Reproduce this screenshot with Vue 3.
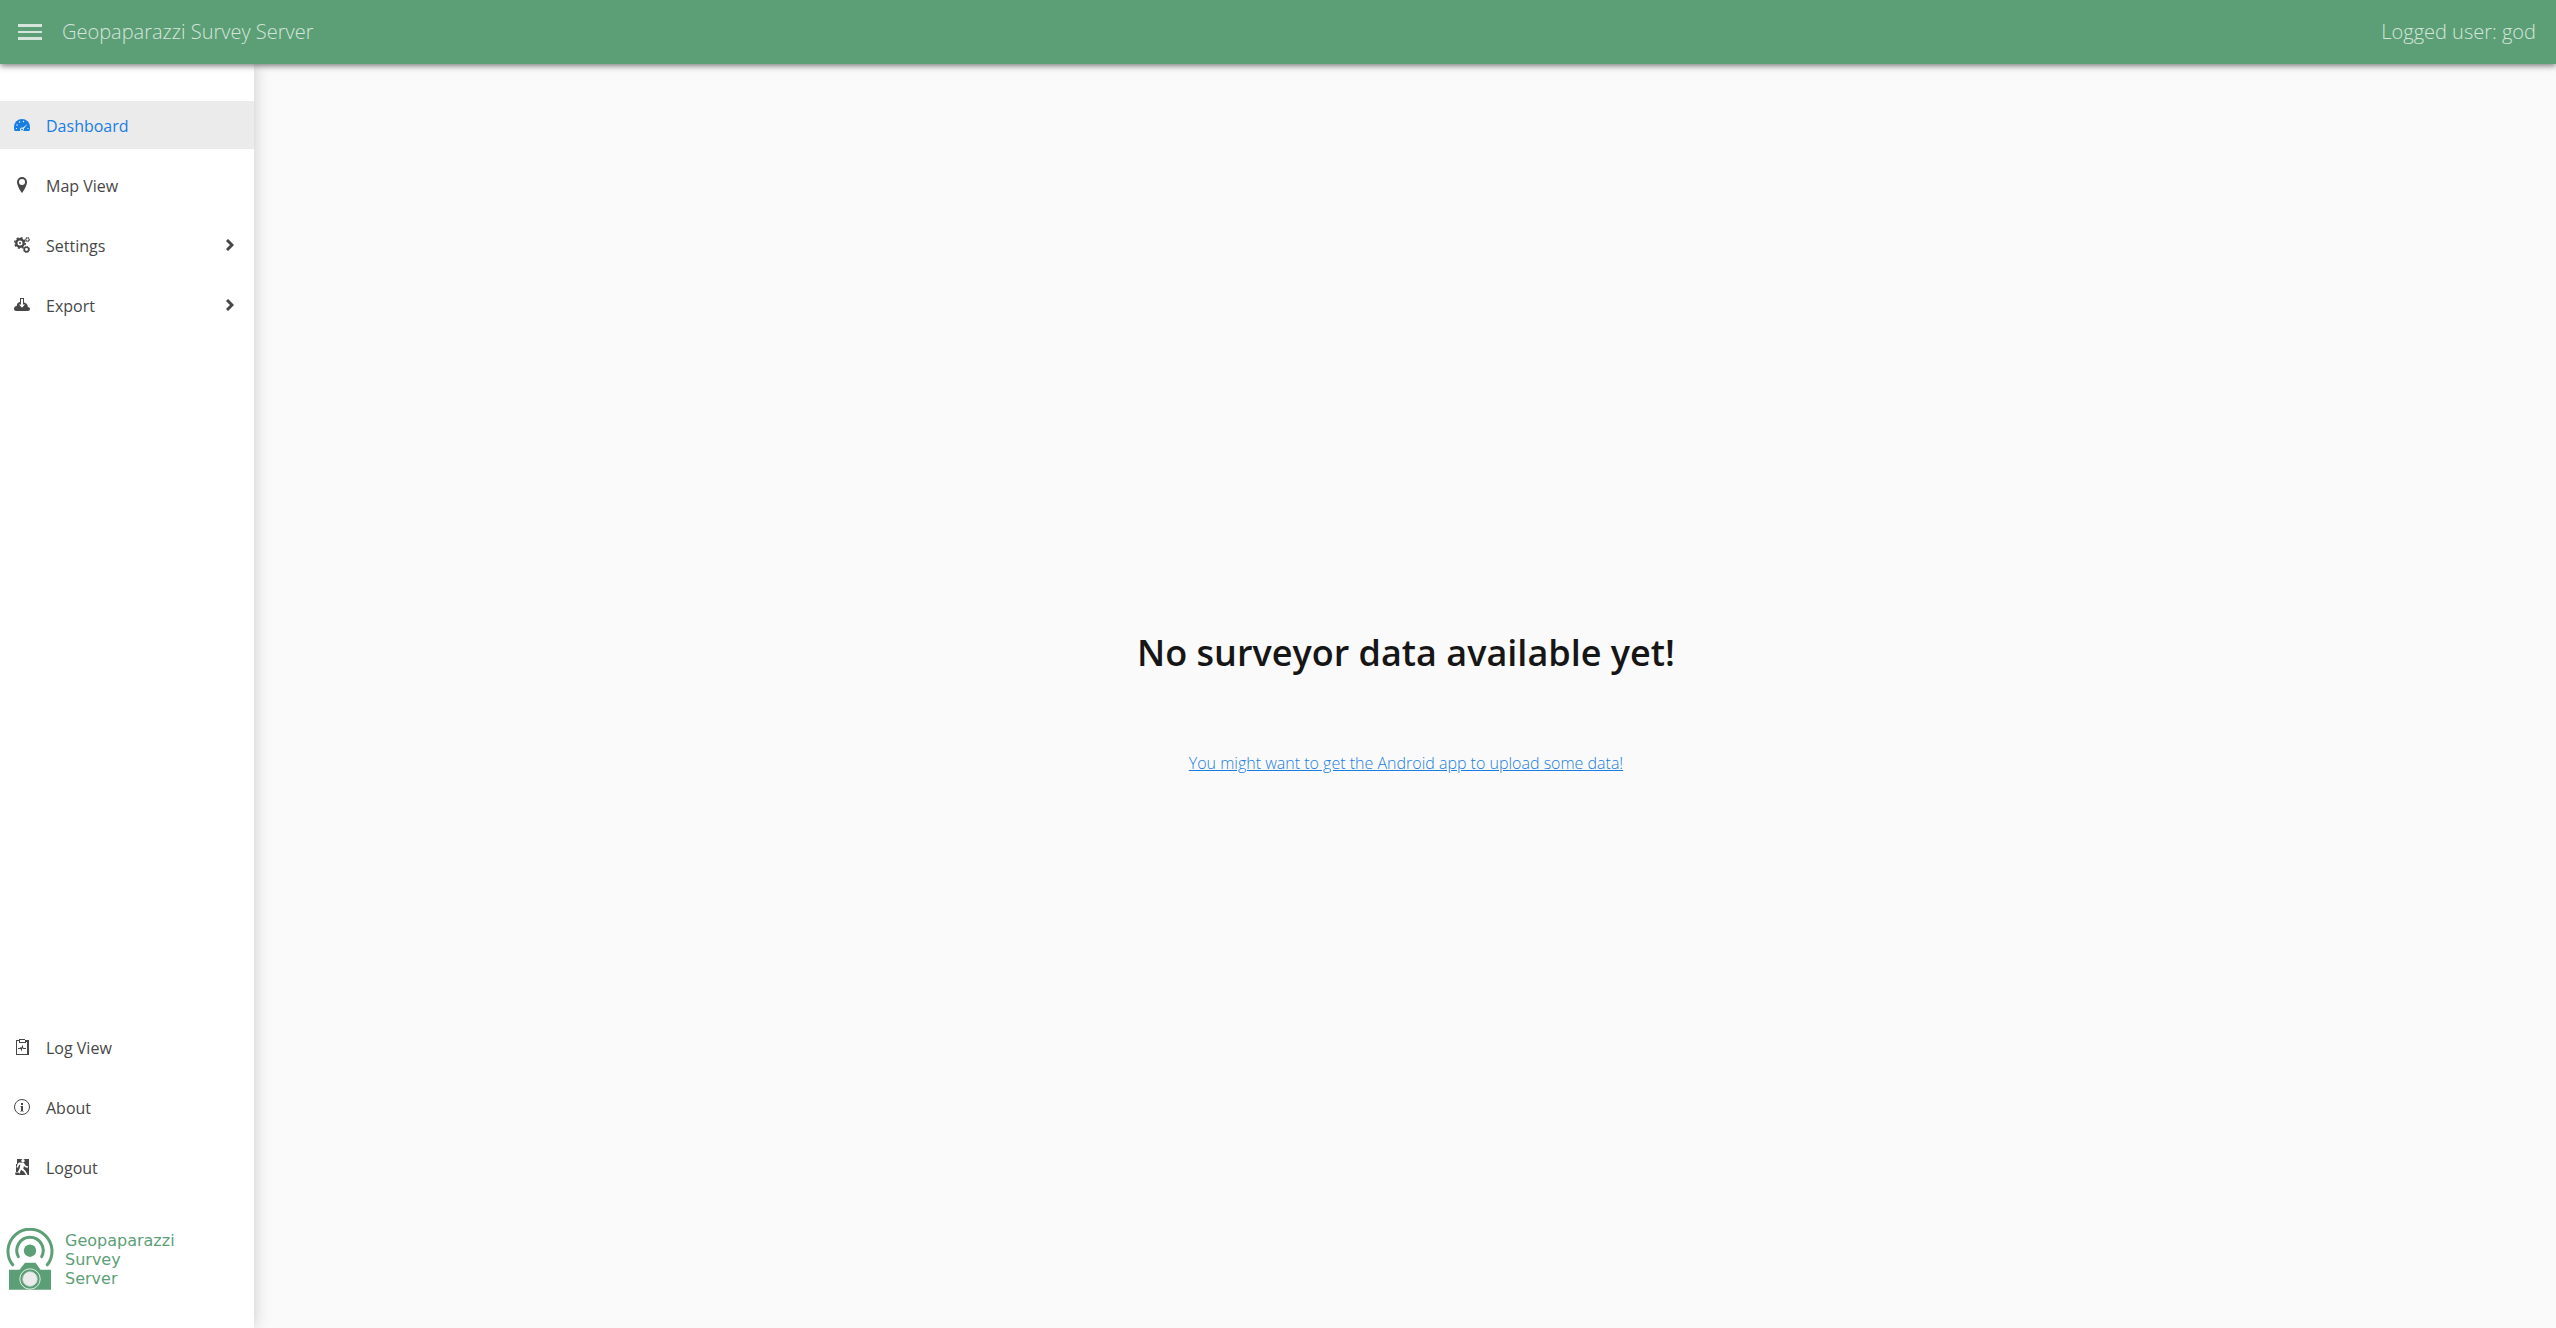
<script setup>
const mainItems = [
  { label: 'Dashboard', icon: 'dashboard', active: true },
  { label: 'Map View', icon: 'pin' },
  { label: 'Settings', icon: 'cogs', expandable: true },
  { label: 'Export', icon: 'download', expandable: true },
]
const footerItems = [
  { label: 'Log View', icon: 'clipboard' },
  { label: 'About', icon: 'info' },
  { label: 'Logout', icon: 'exit' },
]
const groups = [
  { name: 'Main', items: mainItems },
  { name: 'Session', items: footerItems },
]
</script>

<template>
  <div class="app">
    <header class="bar">
      <button class="menu-toggle" type="button" aria-label="Toggle menu">
        <svg width="24" height="16" viewBox="0 0 24 16" fill="currentColor">
          <path d="M0 0h24v3H0zM0 7h24v2H0zM0 13h24v3H0z" />
        </svg>
      </button>
      <span class="title">Geopaparazzi Survey Server</span>
      <span class="user">Logged user: god</span>
    </header>

    <div class="body">
      <aside class="drawer">
        <nav v-for="group in groups" :key="group.name" class="group" :aria-label="group.name">
          <a
            v-for="item in group.items"
            :key="item.label"
            href="#"
            class="item"
            :class="{ active: item.active }"
          >
            <svg class="icon" width="16" height="16" viewBox="0 0 16 16" fill="currentColor" aria-hidden="true">
              <template v-if="item.icon === 'dashboard'">
                <path d="M8 2a8 8 0 0 0-8 8c0 1.500.1 2.900.6 4h14.800c.5-1.100.6-2.500.6-4a8 8 0 0 0-8-8z" />
                <g class="knock">
                  <circle cx="2.500" cy="11.500" r=".6" />
                  <circle cx="3" cy="8" r=".7" />
                  <circle cx="5.500" cy="5" r=".7" />
                  <circle cx="9.500" cy="4.500" r=".7" />
                  <circle cx="14" cy="11.500" r=".6" />
                  <path d="M13.700 7 8.800 10.800a1.800 1.800 0 1 0 .8 1z" />
                </g>
                <circle cx="8" cy="12.500" r="1" />
              </template>
              <path
                v-else-if="item.icon === 'pin'"
                fill-rule="evenodd"
                d="M8 0a5 5 0 0 0-5 5c0 4.500 5 11 5 11s5-6.500 5-11a5 5 0 0 0-5-5zm0 8a3 3 0 1 1 0-6 3 3 0 0 1 0 6z"
              />
              <template v-else-if="item.icon === 'cogs'">
                <g fill="none" stroke="currentColor">
                  <circle cx="6" cy="6" r="3.700" stroke-width="2.400" />
                  <circle cx="6" cy="6" r="5.200" stroke-width="1.600" stroke-dasharray="2 2.080" />
                  <circle cx="12.500" cy="12.500" r="2.200" stroke-width="1.500" />
                  <circle cx="12.500" cy="12.500" r="3.100" stroke-width="1" stroke-dasharray="1.200 1.230" />
                  <circle cx="13.500" cy="2.500" r="1.500" stroke-width="1" />
                  <circle cx="13.500" cy="2.500" r="2.200" stroke-width="1" stroke-dasharray="1 1" />
                </g>
                <circle cx="6" cy="6" r="1" />
              </template>
              <template v-else-if="item.icon === 'download'">
                <path d="M13.800 10c0-.3 0-.5-.1-.8-.2-1.700-1.300-3-2.900-3.200L10 5H6L4.700 5.400C3.300 6 2.600 7.500 2.800 9 1 9.200 0 10.200 0 11.700 0 13 1 14 2.200 14h11.600c1.200 0 2.200-.9 2.200-2 0-1.200-1-2-2.200-2z" />
                <path d="M6 1h4v6H6z" />
                <path class="knock" d="M7 2h2v5.500h2l-3 3.200-3-3.200h2z" />
              </template>
              <template v-else-if="item.icon === 'clipboard'">
                <path fill-rule="evenodd" d="M2 1h3V0h6v1h4v15H2zm1 1v13h10V3h-1v1H5V2zm3-1v2h5V1z" />
                <path d="M4 9h2l1-1.500.5 1.500L8.500 5.500l.9 3.500H12v1H8.900l-.4-1.300L7.500 12.500 6.600 10H4z" />
              </template>
              <template v-else-if="item.icon === 'info'">
                <circle cx="8" cy="8" r="7.500" fill="none" stroke="currentColor" />
                <path d="M7 4h2v2H7zM7 7h2v5H7z" />
                <path d="M6 7h1v1H6zM6 12h4v1H6z" opacity=".4" />
              </template>
              <template v-else>
                <path d="M3 0h12v16H2V5h1z" />
                <g class="knock">
                  <circle cx="9" cy="1.700" r="1.700" />
                  <path d="M5 3.500 9.800 3.700l2 3.100 2.200.5v1.400l-3-.5-1-1.500-.7 3 2.300 2.300 2 4H12l-2-3.200-3-2L5.800 14 5 15H1v-2h2.800l1.800-3.500.8-4L5 6 4 8.500H2.500L3.500 5z" />
                </g>
                <path d="M1.500 13.500h3L6 16H2c-1-.3-1.200-1.800-.5-2.500z" />
              </template>
            </svg>
            <span class="label">{{ item.label }}</span>
            <svg v-if="item.expandable" width="8" height="12" viewBox="0 0 8 12" aria-hidden="true">
              <path d="M1 1l5 5-5 5" fill="none" stroke="currentColor" stroke-width="3" />
            </svg>
          </a>
        </nav>

        <div class="brand">
          <svg width="48" height="63" viewBox="0 0 48 63" aria-hidden="true">
            <g fill="none" stroke="#5c9f76" stroke-width="3" stroke-linecap="round">
              <path d="M6.700 36.800A22 22 0 1 1 41.300 36.800" />
              <path d="M12.300 28.600A13.200 13.200 0 1 1 35.700 28.600" />
            </g>
            <g fill="#5c9f76">
              <circle cx="24" cy="22.700" r="6.200" />
              <path d="M3 41.700h10.500l5.500-7h10.500l5 7H45v20H3z" />
            </g>
            <circle cx="24" cy="51" r="10.200" fill="none" stroke="#fff" stroke-width=".8" />
            <circle cx="24" cy="51" r="7.200" fill="#ececec" stroke="#cfe3d6" stroke-width=".8" />
          </svg>
          <div class="brand-name">Geopaparazzi<br />Survey<br />Server</div>
        </div>
      </aside>

      <main class="content">
        <h1>No surveyor data available yet!</h1>
        <a href="#" class="hint">You might want to get the Android app to upload some data!</a>
      </main>
    </div>
  </div>
</template>

<style>
body {
  margin: 0;
}
</style>

<style scoped>
.app {
  display: flex;
  flex-direction: column;
  min-height: 100vh;
  background: #fafafa;
  color: #474747;
  font-family: "Open Sans", sans-serif;
  font-size: 16px;
}

.bar {
  position: relative;
  z-index: 2;
  display: flex;
  align-items: center;
  box-sizing: border-box;
  height: 64px;
  padding: 0 20px 0 18px;
  background: #5c9f76;
  color: #d5e5db;
  font-size: 20px;
  font-weight: 300;
  box-shadow: 0 2px 6px rgba(0, 0, 0, 0.5);
}

.menu-toggle {
  display: flex;
  margin: 0 20px 0 0;
  padding: 0;
  border: 0;
  background: none;
  color: inherit;
}

.title,
.user {
  padding-bottom: 2px;
}

.user {
  margin-left: auto;
}

.body {
  display: flex;
  flex: 1;
}

.drawer {
  position: relative;
  z-index: 1;
  display: flex;
  flex-direction: column;
  flex-shrink: 0;
  box-sizing: border-box;
  width: 254px;
  padding: 37px 0;
  background: #fff;
  box-shadow: 0 0 16px rgba(0, 0, 0, 0.2);
}

.group {
  display: flex;
  flex-direction: column;
  gap: 12px;
}

.group + .group {
  margin-top: auto;
}

.item {
  display: flex;
  align-items: center;
  box-sizing: border-box;
  height: 48px;
  padding: 0 20px 0 14px;
  color: #474747;
  text-decoration: none;
}

.icon {
  margin-right: 16px;
}

.label {
  flex: 1;
  padding-top: 2px;
}

.item.active {
  background: #ebebeb;
  color: #197de1;
}

.knock {
  fill: #fff;
}

.brand {
  display: flex;
  align-items: center;
  gap: 11px;
  margin-top: 37px;
  padding-left: 6px;
}

.brand-name {
  color: #5c9f76;
  font-family: "DejaVu Sans", sans-serif;
  font-size: 16px;
  line-height: 19px;
}

.content {
  display: flex;
  flex: 1;
  flex-direction: column;
  align-items: center;
  justify-content: center;
  gap: 74px;
  padding: 12px 0 0 2px;
}

h1 {
  margin: 0;
  color: #161616;
  font-size: 36px;
  font-weight: 600;
  line-height: 48px;
}

.hint {
  color: #197de1;
  font-weight: 300;
  line-height: 24px;
}
</style>
